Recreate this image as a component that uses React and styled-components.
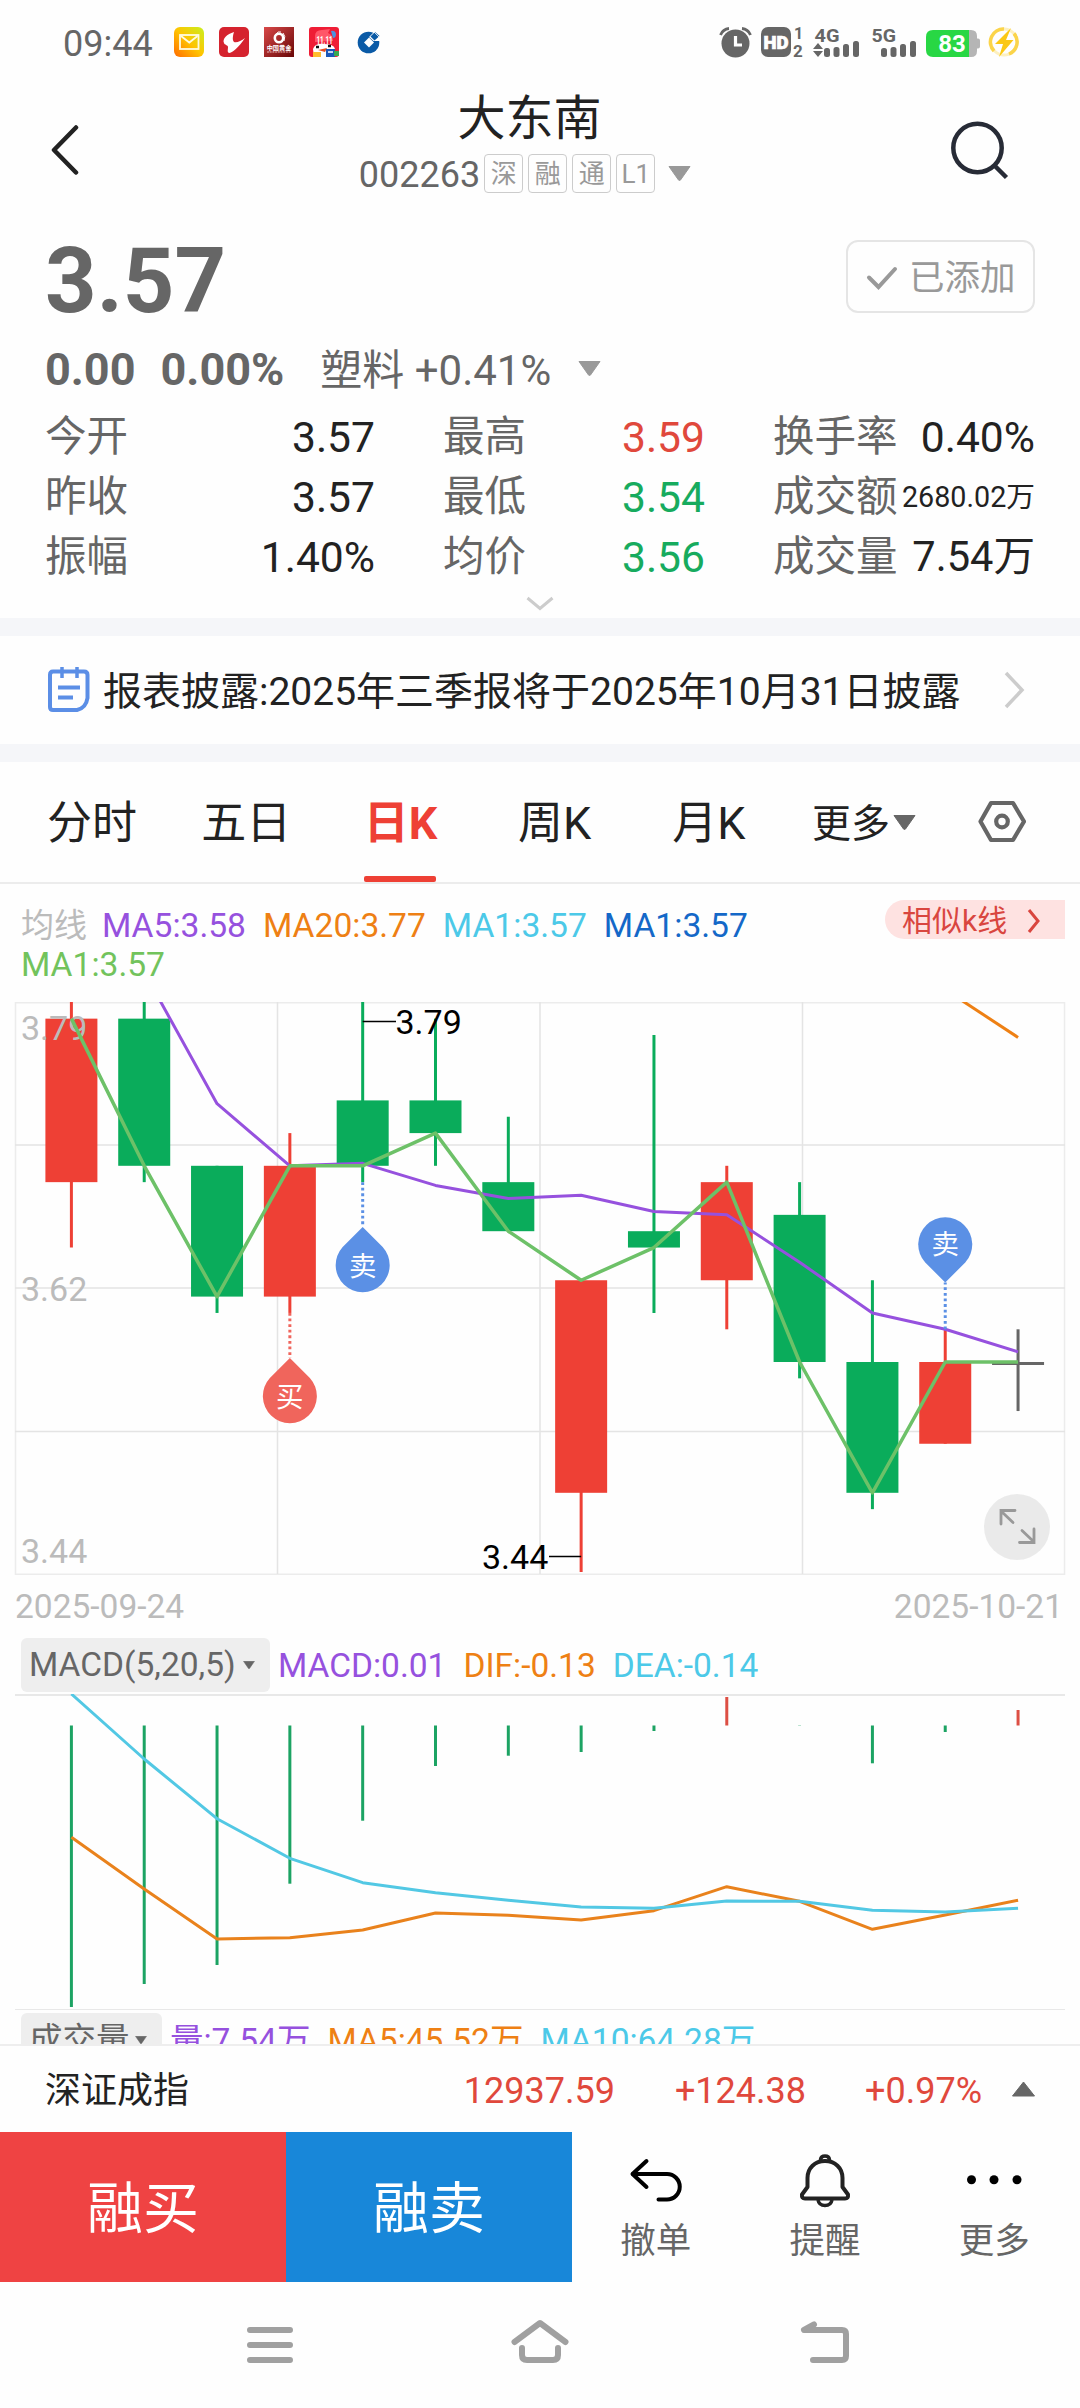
import React from 'react';
import styled, { createGlobalStyle } from 'styled-components';

const GlobalStyle = createGlobalStyle`
  * { box-sizing: border-box; }
  body {
    margin: 0;
    background: #fefefe;
    font-family: Roboto, "Noto Sans CJK SC", sans-serif;
    color: #222;
  }
  svg { display: block; flex: none; }
`;

const C = {
  red: '#ee4035',
  green: '#0aac5b',
  up: '#e0483c',
  down: '#17ab5e',
  purple: '#9651de',
  orange: '#ee8014',
  cyan: '#4cc9e8',
  blue: '#1468c8',
  lime: '#72c35c',
  gray: '#666',
  light: '#bbb',
};

const Screen = styled.div`
  width: 1080px;
  height: 2408px;
  overflow: hidden;
  display: flex;
  flex-direction: column;
  background: #fefefe;
`;

/* ---------- status bar ---------- */
const StatusBar = styled.div`
  height: 84px;
  flex: none;
  display: flex;
  align-items: center;
  padding: 0 60px 0 63px;
`;
const Time = styled.span`
  font-size: 36px;
  line-height: 40px;
  padding-top: 3px;
  width: 111px;
  color: #666;
`;
const AppIcons = styled.div`
  display: flex;
  gap: 15px;
  flex: 1;
`;

/* ---------- header ---------- */
const Header = styled.header`
  height: 132px;
  flex: none;
  display: grid;
  grid-template-columns: 1fr auto 1fr;
  align-items: center;
  padding: 0 71px 0 50px;
`;
const TitleBlock = styled.div`
  align-self: start;
  padding-top: 6px;
  display: flex;
  flex-direction: column;
  align-items: center;
`;
const Title = styled.h1`
  margin: 0;
  font-size: 48px;
  font-weight: 400;
  line-height: 57px;
`;
const CodeRow = styled.div`
  margin-top: 7px;
  height: 39px;
  display: flex;
  align-items: center;
  padding-right: 9px;
`;
const Code = styled.span`
  font-size: 36px;
  line-height: 39px;
  padding-top: 4px;
  margin-right: 4px;
  color: #666;
`;
const Tag = styled.span`
  width: 39px;
  height: 39px;
  margin-right: 5px;
  border: 1.5px solid #ccc;
  border-radius: 4px;
  font-size: 26px;
  line-height: 39px;
  text-align: center;
  color: #999;
`;
const RightSlot = styled.div`
  justify-self: end;
`;

/* ---------- quote ---------- */
const Quote = styled.section`
  height: 402px;
  flex: none;
  padding: 24px 45px 0;
  display: flex;
  flex-direction: column;
`;
const PriceRow = styled.div`
  height: 73px;
  display: flex;
  align-items: center;
  justify-content: space-between;
`;
const Price = styled.span`
  font-size: 90px;
  font-weight: 700;
  line-height: 73px;
  padding-top: 10px;
  color: #666;
`;
const AddedButton = styled.button`
  width: 189px;
  height: 73px;
  padding: 2px 0 0 18px;
  display: flex;
  align-items: center;
  gap: 11px;
  border: 2px solid #e5e5e5;
  border-radius: 12px;
  background: none;
  font: 400 35.5px/66px Roboto, "Noto Sans CJK SC", sans-serif;
  color: #999;
`;
const ChangeRow = styled.div`
  margin-top: 30px;
  display: flex;
  align-items: baseline;
  line-height: 54px;
  color: #666;
`;
const Change = styled.span`
  font-size: 45px;
  font-weight: 700;
  margin-right: ${(p) => p.$gap}px;
`;
const Sector = styled.span`
  font-size: 42px;
  margin-right: 27px;
`;
const SectorArrow = styled.span`
  align-self: center;
  padding-bottom: 5px;
`;
const Stats = styled.div`
  margin-top: 9px;
  display: grid;
  grid-template-columns: 330px 262px 262px;
  column-gap: 68px;
`;
const Stat = styled.div`
  height: 60px;
  display: flex;
  align-items: center;
  justify-content: space-between;
  white-space: nowrap;
  font-size: 42px;
  line-height: 60px;
`;
const StatLabel = styled.span`
  color: #666;
  font-size: 41.5px;
`;
const StatValue = styled.span`
  color: ${(p) => p.$color || '#222'};
  font-size: ${(p) => p.$size || 42.6}px;
`;
const Expander = styled.div`
  display: flex;
  justify-content: center;
  padding-top: 9px;
`;

const Band = styled.div`
  height: 18px;
  flex: none;
  background: #f5f6f9;
`;

/* ---------- notice ---------- */
const Notice = styled.div`
  height: 108px;
  flex: none;
  display: flex;
  align-items: center;
  padding: 0 54px 0 47px;
`;
const NoticeText = styled.span`
  flex: 1;
  padding: 3px 0 0 13px;
  font-size: 39px;
  line-height: 54px;
  white-space: nowrap;
`;

/* ---------- period tabs ---------- */
const Tabs = styled.nav`
  height: 122px;
  flex: none;
  display: flex;
  padding-left: 15px;
  border-bottom: 2px solid #ececec;
`;
const Tab = styled.div`
  width: 154.2px;
  display: flex;
  flex-direction: column;
  align-items: center;
  font-size: 45px;
  line-height: 60px;
  padding-top: 32px;
  color: ${(p) => (p.$active ? C.red : '#222')};
  font-weight: ${(p) => (p.$active ? 700 : 400)};
`;
const TabMark = styled.span`
  width: 72px;
  height: 6px;
  margin-top: auto;
  border-radius: 2px;
  background: ${C.red};
`;
const MoreTab = styled.div`
  width: 166px;
  margin-left: 26px;
  display: flex;
  align-items: center;
  gap: 3px;
  font-size: 39px;
`;
const MoreText = styled.span`
  padding-top: 3px;
  line-height: 60px;
`;
const HexSlot = styled.div`
  display: flex;
  align-items: center;
`;

/* ---------- charts ---------- */
const Charts = styled.section`
  height: 1160px;
  flex: none;
  overflow: hidden;
`;
const LegendArea = styled.div`
  height: 118px;
  display: flex;
  align-items: flex-start;
  padding: 0 15px 0 21px;
`;
const Legend = styled.div`
  flex: 1;
  display: flex;
  flex-wrap: wrap;
  column-gap: 17px;
  padding-top: 22px;
  font-size: 33.6px;
  line-height: 39px;
`;
const LegendTitle = styled.span`
  width: 64px;
  font-size: 33px;
  white-space: nowrap;
  color: ${C.light};
`;
const Colored = styled.span`
  color: ${(p) => p.$color};
`;
const SimilarPill = styled.div`
  width: 180px;
  height: 39px;
  margin-top: 16px;
  display: flex;
  align-items: center;
  gap: 20px;
  padding: 2px 0 0 17px;
  border-radius: 20px 0 0 20px;
  background: #fee2e1;
  font-size: 30px;
  line-height: 37px;
  color: #d9463f;
`;
const KChart = styled.div`
  position: relative;
  height: 573px;
`;
const FullscreenButton = styled.div`
  position: absolute;
  right: 30px;
  bottom: 15px;
  width: 66px;
  height: 66px;
  border-radius: 50%;
  background: rgba(232, 232, 232, 0.9);
`;
const DateRow = styled.div`
  height: 63px;
  padding: 0 17px 0 15px;
  display: flex;
  align-items: center;
  justify-content: space-between;
  font-size: 33.5px;
  line-height: 40px;
  color: ${C.light};
`;
const IndicatorRow = styled.div`
  height: ${(p) => (p.$last ? 54 : 56)}px;
  margin-top: ${(p) => (p.$last ? 3 : 0)}px;
  display: flex;
  padding-left: 21px;
  font-size: 33.5px;
  line-height: 56px;
  white-space: nowrap;
`;
const Chip = styled.div`
  width: ${(p) => p.$width}px;
  height: 54px;
  margin-right: 8px;
  padding: 0 15px 0 8px;
  display: flex;
  align-items: center;
  justify-content: space-between;
  border-radius: 6px;
  background: #eee;
  color: #666;
`;
const Readings = styled.div`
  display: flex;
  gap: 17px;
`;

/* ---------- index row ---------- */
const IndexRow = styled.div`
  height: 88px;
  flex: none;
  display: flex;
  align-items: center;
  border-top: 2px solid #eee;
  padding: 0 45px;
  font-size: 36px;
  line-height: 50px;
`;
const IndexName = styled.span`
  flex: 1;
  padding-top: 3px;
`;
const IndexValue = styled.span`
  padding-top: 3px;
  margin-right: ${(p) => p.$gap}px;
  color: ${C.up};
`;

/* ---------- action bar ---------- */
const ActionBar = styled.div`
  height: 150px;
  flex: none;
  display: flex;
`;
const TradeButton = styled.div`
  width: 286px;
  display: flex;
  align-items: center;
  justify-content: center;
  font-size: 56px;
  line-height: 80px;
  padding-top: 4px;
  color: #fff;
  background: ${(p) => p.$color};
`;
const Action = styled.div`
  flex: 1;
  display: flex;
  flex-direction: column;
  align-items: center;
  padding-top: 18px;
  padding-right: 2px;
`;
const ActionLabel = styled.span`
  margin-top: 6px;
  font-size: 35.5px;
  line-height: 50px;
  color: #666;
`;
const SystemNav = styled.div`
  height: 126px;
  flex: none;
  display: flex;
  justify-content: space-between;
  align-items: flex-start;
  padding: 34px 224px 0 240px;
`;

/* ---------- drawings ---------- */
const Triangle = ({ w = 23, h = 15, color = '#999', up }) => (
  <svg width={w} height={h} viewBox="0 0 23 15">
    <path
      d={up ? 'M11.5 0.5 L22.5 14.5 H0.5Z' : 'M1 0.5 H22 L12.5 14 Q11.5 15 10.5 14Z'}
      fill={color}
      stroke={color}
      strokeLinejoin="round"
    />
  </svg>
);

const MailIcon = () => (
  <svg width="30" height="30" viewBox="0 0 30 30">
    <defs>
      <linearGradient id="mail" x1="0" y1="1" x2="1" y2="0">
        <stop offset="0" stopColor="#ff6a00" />
        <stop offset="0.5" stopColor="#ffc400" />
        <stop offset="1" stopColor="#c8f020" />
      </linearGradient>
    </defs>
    <rect width="30" height="30" rx="6" fill="url(#mail)" />
    <rect x="6" y="8" width="18.500" height="14" fill="none" stroke="#fffbe0" strokeWidth="1.8" />
    <path d="M7 9 L15.300 15.500 L23.500 9" fill="none" stroke="#fffbe0" strokeWidth="1.8" />
  </svg>
);
const BrokerIcon = () => (
  <svg width="30" height="30" viewBox="0 0 30 30">
    <rect width="30" height="30" rx="5" fill="#d5232e" />
    <path d="M15 5 C8 7 3 12 5 16 C5.500 18 9 18 9 20 C9 23 8 25 10 26 C13 26 20 20 26 11 C22 14 18 16 15 15 C13 13 14 8 15 5Z" fill="#fff" />
  </svg>
);
const GoldIcon = () => (
  <svg width="30" height="30" viewBox="0 0 30 30">
    <defs>
      <linearGradient id="gold" x1="0" y1="0" x2="1" y2="1">
        <stop offset="0" stopColor="#d84848" />
        <stop offset="1" stopColor="#680606" />
      </linearGradient>
    </defs>
    <rect width="30" height="30" fill="url(#gold)" />
    <circle cx="15" cy="11" r="4.200" fill="none" stroke="#fff" strokeWidth="2.600" />
    <path d="M12 7 Q14 4 17 5 M19 6 Q22 9 20 14" fill="none" stroke="#fff" strokeWidth="1" />
    <text x="15" y="23" textAnchor="middle" fontSize="6.2" fontWeight="700" fill="#fff">中国黄金</text>
    <path d="M3 25 H27" stroke="#e8b8b8" strokeWidth="1" strokeDasharray="2 0.7" />
  </svg>
);
const ShopIcon = () => (
  <svg width="30" height="30" viewBox="0 0 30 30">
    <rect width="30" height="30" rx="3" fill="#ef1d35" />
    <path d="M6 9 Q6 3 13 3 L21 2 L19 6 Q24 8 24 14 L6 15Z" fill="#ff5668" />
    <path d="M22 4 q4 -1 5 3 q0 4 -3 4z" fill="#4d92de" />
    <text x="15.500" y="16.500" textAnchor="middle" fontSize="11" fontWeight="700" fill="#fff" textLength="16" lengthAdjust="spacingAndGlyphs">11.11</text>
    <path d="M4 22 Q6 16 15 17 Q25 17 26 22 L25 30 H5Z" fill="#fff" />
    <path d="M7 20 h3 M19 19 h3" stroke="#111" strokeWidth="2.400" />
    <path d="M9 23 L18 21 L16 25Z" fill="#e84c20" />
    <path d="M4 25 h8 v5 h-8z" fill="#ffbd2c" />
    <path d="M17 22 h9 v8 h-9z" fill="#1b58b9" />
    <path d="M25 24 h5 v5 h-5z" fill="#38a852" />
    <path d="M19 25 h5" stroke="#fff" strokeWidth="1.500" />
  </svg>
);
const BankIcon = () => (
  <svg width="30" height="30" viewBox="0 0 30 30">
    <circle cx="14.500" cy="15.500" r="10.800" fill="#0a5aa6" />
    <path d="M15 10 L20 5 L27 5 V14 H19.500Z" fill="#fefefe" />
    <path d="M15 10.500 L20 15.500 L15 20.500 L10 15.500Z" fill="#fefefe" />
    <path d="M16.500 9.500 L21 5 L25.500 9 L20.500 13.500Z" fill="#0a5aa6" />
    <path d="M20 5 L26 11" stroke="#fefefe" strokeWidth="0.8" />
  </svg>
);

const SystemIcons = () => (
  <svg width="301" height="40" viewBox="720 22 301 40" fill="#666">
    <circle cx="736.500" cy="43.500" r="14" />
    <path d="M721.500 35 Q724 29 730 28.500 M743 28.500 Q749 29 751.500 35" fill="none" stroke="#666" strokeWidth="2.800" />
    <path d="M736.500 36 V45 H743" fill="none" stroke="#fff" strokeWidth="3.200" />
    <rect x="762" y="27" width="30" height="30" rx="7" />
    <text x="777" y="48.500" textAnchor="middle" fontSize="18" fontWeight="900" fill="#fff" stroke="#fff" strokeWidth="0.700" textLength="25" lengthAdjust="spacingAndGlyphs">HD</text>
    <text x="795" y="38.500" fontSize="16" fontWeight="700">1</text>
    <text x="794" y="57" fontSize="17" fontWeight="700">2</text>
    <text x="815.500" y="42" fontSize="19" fontWeight="700" textLength="25" lengthAdjust="spacingAndGlyphs">4G</text>
    <path d="M814 49 L819 43 L824 49Z M814 51 L819 57 L824 51Z" />
    <rect x="825" y="48" width="6" height="9" rx="2.500" />
    <rect x="834.500" y="47" width="6" height="10" rx="2.500" />
    <rect x="844" y="44" width="6" height="13" rx="2.500" />
    <rect x="854" y="41" width="6" height="16" rx="2.500" />
    <text x="872.500" y="42" fontSize="19" fontWeight="700" textLength="24.500" lengthAdjust="spacingAndGlyphs">5G</text>
    <rect x="882" y="48" width="6" height="9" rx="2.500" />
    <rect x="891.500" y="47" width="6" height="10" rx="2.500" />
    <rect x="901" y="44" width="6" height="13" rx="2.500" />
    <rect x="911" y="41" width="6" height="16" rx="2.500" />
    <path d="M965 30 h7 q6 0 6 6 v2.500 h1 q2 0 2 2 v6 q0 2 -2 2 h-1 v2.500 q0 6 -6 6 h-7z" fill="#b5b5b5" />
    <path d="M934 30 H970 V57 H934 Q927 57 927 50 V37 Q927 30 934 30Z" fill="#28d744" />
    <text x="953" y="52" textAnchor="middle" fontSize="24" fontWeight="700" fill="#fff">83</text>
    <circle cx="1005" cy="42" r="13" fill="none" stroke="#fdf0c0" strokeWidth="3" />
    <path d="M995 51 A13 13 0 0 1 1005 29 M1015 33.500 A13 13 0 0 1 1010 54" fill="none" stroke="#fbd44a" strokeWidth="3.500" />
    <path d="M1012 28 L996 44 H1004 L1000 57 L1014.500 40 H1007Z" fill="#fbc814" />
  </svg>
);

/* ---------- market data ---------- */
const X0 = 71.4;
const STEP = 72.82;
const xAt = (i) => X0 + i * STEP;
const yAt = (p) => 0.3 + (3.79 - p) * 1635;

const candles = [
  { top: 3.78, bot: 3.68, hi: 3.8, lo: 3.64, up: true, close: 3.78 },
  { top: 3.78, bot: 3.69, hi: 3.8, lo: 3.68, close: 3.69 },
  { top: 3.69, bot: 3.61, hi: 3.69, lo: 3.6, close: 3.61 },
  { top: 3.69, bot: 3.61, hi: 3.71, lo: 3.6, up: true, close: 3.69 },
  { top: 3.73, bot: 3.69, hi: 3.8, lo: 3.68, close: 3.69 },
  { top: 3.73, bot: 3.71, hi: 3.78, lo: 3.69, close: 3.71 },
  { top: 3.68, bot: 3.65, hi: 3.72, lo: 3.65, close: 3.65 },
  { top: 3.62, bot: 3.49, hi: 3.62, lo: 3.4415, up: true, close: 3.62 },
  { top: 3.65, bot: 3.64, hi: 3.77, lo: 3.6, close: 3.64 },
  { top: 3.68, bot: 3.62, hi: 3.69, lo: 3.59, up: true, close: 3.68 },
  { top: 3.66, bot: 3.57, hi: 3.68, lo: 3.56, close: 3.57 },
  { top: 3.57, bot: 3.49, hi: 3.62, lo: 3.48, close: 3.49 },
  { top: 3.57, bot: 3.52, hi: 3.59, lo: 3.52, up: true, close: 3.57 },
  { top: 3.57, bot: 3.57, hi: 3.59, lo: 3.54, flat: true, close: 3.57 },
];
const ma5 = [null, 3.8085, 3.728, 3.69, 3.6915, 3.678, 3.67, 3.672, 3.662, 3.66, 3.631, 3.6, 3.59, 3.5762];

const histogram = [313, 290, 271, 189.7, 126.7, 72, 61.7, 58, 37, 3, 31.8, 69.3, 38, 16];
const dea = [0, 65, 124.7, 164.3, 188.7, 198.7, 206.3, 213, 214.3, 207, 207.3, 216.3, 218, 214.3];
const dif = [143.3, 195, 245, 243.7, 236, 219, 221.3, 226, 216.7, 192.7, 207.3, 235.3, 221, 206.3];

const toPoints = (ys) =>
  ys.map((y, i) => (y === null ? null : `${xAt(i)},${y}`)).filter(Boolean).join(' ');

const Pin = ({ x, y, color, label, down, wickY }) => {
  const tip = down ? y + 39 : y - 39;
  const s = down ? 1 : -1;
  return (
    <g>
      <path d={`M${x} ${wickY} V${tip}`} stroke={color} strokeWidth="3" strokeDasharray="2.800 2.800" />
      <path
        d={`M${x} ${tip} L${x - 20} ${y + s * 19} A27 27 0 1 ${down ? 1 : 0} ${x + 20} ${y + s * 19}Z`}
        fill={color}
      />
      <text x={x} y={y + 10} textAnchor="middle" fontSize="27.500" fill="#fff">{label}</text>
    </g>
  );
};

const CandleChart = () => (
  <svg width="1080" height="573" viewBox="0 0 1080 573" fontSize="34">
    <defs>
      <clipPath id="plot"><rect x="15" y="0" width="1050" height="573" /></clipPath>
    </defs>
    <g stroke="#e4e4e4" strokeWidth="1.500" fill="none">
      <rect x="15.500" y="0.750" width="1049" height="571.500" stroke="#ececec" />
      <path d="M15 143 H1065 M15 286 H1065 M15 429.500 H1065 M277.500 0 V572 M540 0 V572 M802.500 0 V572" />
    </g>
    <g clipPath="url(#plot)">
      {candles.map((c, i) => {
        const color = c.flat ? '#666' : c.up ? C.red : C.green;
        const x = xAt(i);
        return (
          <g key={i}>
            <path d={`M${x} ${yAt(c.hi)} V${yAt(c.lo)}`} stroke={color} strokeWidth="3" />
            {c.flat ? (
              <path d={`M${x - 26} ${yAt(c.top) + 1.5} h52`} stroke={color} strokeWidth="3" />
            ) : (
              <rect x={x - 26} y={yAt(c.top)} width="52" height={yAt(c.bot) - yAt(c.top)} fill={color} />
            )}
          </g>
        );
      })}
      <g fill={C.light}>
        <text x="21" y="37.500">3.79</text>
        <text x="21" y="299">3.62</text>
        <text x="21" y="561">3.44</text>
      </g>
      <g fill="none" strokeWidth="3" strokeLinejoin="round">
        <polyline points={toPoints(ma5.map((v) => (v === null ? null : yAt(v))))} stroke={C.purple} />
        <path d={`M${xAt(12)} -12.400 L${xAt(13)} 35.400`} stroke={C.orange} />
        <polyline points={toPoints(candles.map((c) => yAt(c.close)))} stroke="#6dc168" strokeWidth="3.500" />
      </g>
      <path d={`M${xAt(4)} 19.500 H396 M549 554.500 H${xAt(7)}`} stroke="#000" strokeWidth="1.500" />
      <text x="395.500" y="31.500" fill="#000">3.79</text>
      <text x="482" y="566.500" fill="#000">3.44</text>
    </g>
    <Pin x={xAt(4)} y={264} color="#5b90e5" label="卖" wickY={yAt(3.68)} />
    <Pin x={xAt(3)} y={395} color="#f0655c" label="买" wickY={yAt(3.6)} />
    <Pin x={xAt(12)} y={241.500} color="#5b90e5" label="卖" wickY={yAt(3.59)} down />
  </svg>
);

const ZERO = 31.5;
const MacdChart = () => (
  <svg width="1080" height="316" viewBox="0 0 1080 316">
    <path d="M15 1 H1065" stroke="#e8e8e8" strokeWidth="2" />
    <path d="M15 315.500 H1065" stroke="#e8e8e8" strokeWidth="1" />
    {histogram.map((y, i) => (
      <path
        key={i}
        d={`M${xAt(i)} ${ZERO} V${y}`}
        stroke={y < ZERO ? '#dd4f44' : '#1ca363'}
        strokeWidth="3"
      />
    ))}
    <g fill="none" strokeWidth="3" strokeLinejoin="round">
      <polyline points={toPoints(dif)} stroke="#e9821c" />
      <polyline points={toPoints(dea)} stroke="#52c8e4" />
    </g>
  </svg>
);

const stats = [
  ['今开', '3.57'], ['最高', '3.59', C.up], ['换手率', '0.40%'],
  ['昨收', '3.57'], ['最低', '3.54', C.down], ['成交额', '2680.02万', null, 28.7],
  ['振幅', '1.40%'], ['均价', '3.56', C.down], ['成交量', '7.54万', null, 41.6],
];
const tabs = ['分时', '五日', '日K', '周K', '月K'];

export default function App() {
  return (
    <Screen>
      <GlobalStyle />
      <StatusBar>
        <Time>09:44</Time>
        <AppIcons>
          <MailIcon /><BrokerIcon /><GoldIcon /><ShopIcon /><BankIcon />
        </AppIcons>
        <SystemIcons />
      </StatusBar>

      <Header>
        <svg width="30" height="50" viewBox="0 0 30 50">
          <path d="M26 2.500 L4 25 L26 47.500" fill="none" stroke="#222" strokeWidth="4.500" strokeLinecap="round" strokeLinejoin="round" />
        </svg>
        <TitleBlock>
          <Title>大东南</Title>
          <CodeRow>
            <Code>002263</Code>
            {['深', '融', '通', 'L1'].map((t) => <Tag key={t}>{t}</Tag>)}
            <svg width="8" height="1" />
            <Triangle />
          </CodeRow>
        </TitleBlock>
        <RightSlot>
          <svg width="60" height="60" viewBox="0 0 60 60">
            <circle cx="28.500" cy="28" r="24.200" fill="none" stroke="#272b36" strokeWidth="4.500" />
            <path d="M46 46 L57.500 57.500" stroke="#272b36" strokeWidth="4.500" />
          </svg>
        </RightSlot>
      </Header>

      <Quote>
        <PriceRow>
          <Price>3.57</Price>
          <AddedButton>
            <svg width="32" height="26" viewBox="0 0 32 26">
              <path d="M3 12.500 L12.500 22 L29 4" fill="none" stroke="#999" strokeWidth="4" strokeLinecap="round" />
            </svg>
            已添加
          </AddedButton>
        </PriceRow>
        <ChangeRow>
          <Change $gap={25}>0.00</Change>
          <Change $gap={36}>0.00%</Change>
          <Sector>塑料 +0.41%</Sector>
          <SectorArrow><Triangle /></SectorArrow>
        </ChangeRow>
        <Stats>
          {stats.map(([label, value, color, size]) => (
            <Stat key={label}>
              <StatLabel>{label}</StatLabel>
              <StatValue $color={color} $size={size}>{value}</StatValue>
            </Stat>
          ))}
        </Stats>
        <Expander>
          <svg width="30" height="16" viewBox="0 0 30 16">
            <path d="M2.500 2 L15 12.500 L27.500 2" fill="none" stroke="#ccc" strokeWidth="3" />
          </svg>
        </Expander>
      </Quote>

      <Band />
      <Notice>
        <svg width="43" height="46" viewBox="0 0 43 46" fill="none" stroke="#5b8ee6" strokeWidth="4">
          <path d="M6 4.500 H37 Q40.500 4.500 40.500 8 V31 Q39 41 30 43 H6 Q3 43 3 40 V8 Q3 4.500 6 4.500Z" />
          <path d="M15 0 V11 M30 0 V11" strokeWidth="3.500" />
          <path d="M11 20.500 H33 M11 30.500 H26" />
        </svg>
        <NoticeText>报表披露:2025年三季报将于2025年10月31日披露</NoticeText>
        <svg width="22" height="40" viewBox="0 0 22 40">
          <path d="M2 3 L18 20 L2 37" fill="none" stroke="#ccc" strokeWidth="3.500" />
        </svg>
      </Notice>
      <Band />

      <Tabs>
        {tabs.map((t, i) => (
          <Tab key={t} $active={i === 2}>
            {t}
            {i === 2 && <TabMark />}
          </Tab>
        ))}
        <MoreTab>
          <MoreText>更多</MoreText>
          <Triangle color="#666" />
        </MoreTab>
        <HexSlot>
          <svg width="48" height="44" viewBox="0 0 48 44" fill="none" stroke="#666" strokeWidth="4.200">
            <path d="M13 3 H35 L46 21.500 L35 40 H13 L2.500 21.500Z" strokeLinejoin="round" />
            <circle cx="24" cy="21.500" r="5.800" />
          </svg>
        </HexSlot>
      </Tabs>

      <Charts>
        <LegendArea>
          <Legend>
            <LegendTitle>均线</LegendTitle>
            <Colored $color={C.purple}>MA5:3.58</Colored>
            <Colored $color={C.orange}>MA20:3.77</Colored>
            <Colored $color={C.cyan}>MA1:3.57</Colored>
            <Colored $color={C.blue}>MA1:3.57</Colored>
            <Colored $color={C.lime}>MA1:3.57</Colored>
          </Legend>
          <SimilarPill>
            相似k线
            <svg width="14" height="26" viewBox="0 0 14 26">
              <path d="M2 2 L11 13 L2 24" fill="none" stroke="#d9463f" strokeWidth="3" />
            </svg>
          </SimilarPill>
        </LegendArea>
        <KChart>
          <CandleChart />
          <FullscreenButton>
            <svg width="66" height="66" viewBox="0 0 66 66" fill="none" stroke="#999" strokeWidth="2.800" strokeLinecap="round">
              <path d="M31 16.500 H17 V30 M18 18 L29 28.500" />
              <path d="M35.500 48.500 H50 V35 M49 47 L38 36.500" />
            </svg>
          </FullscreenButton>
        </KChart>
        <DateRow>
          <span>2025-09-24</span>
          <span>2025-10-21</span>
        </DateRow>
        <IndicatorRow>
          <Chip $width={249}>
            MACD(5,20,5)
            <Triangle w={12} h={8} color="#666" />
          </Chip>
          <Readings>
            <Colored $color={C.purple}>MACD:0.01</Colored>
            <Colored $color={C.orange}>DIF:-0.13</Colored>
            <Colored $color={C.cyan}>DEA:-0.14</Colored>
          </Readings>
        </IndicatorRow>
        <MacdChart />
        <IndicatorRow $last>
          <Chip $width={141}>
            成交量
            <Triangle w={12} h={8} color="#666" />
          </Chip>
          <Readings>
            <Colored $color={C.purple}>量:7.54万</Colored>
            <Colored $color={C.orange}>MA5:45.52万</Colored>
            <Colored $color={C.cyan}>MA10:64.28万</Colored>
          </Readings>
        </IndicatorRow>
      </Charts>

      <IndexRow>
        <IndexName>深证成指</IndexName>
        <IndexValue $gap={60}>12937.59</IndexValue>
        <IndexValue $gap={59}>+124.38</IndexValue>
        <IndexValue $gap={30}>+0.97%</IndexValue>
        <Triangle color="#666" up h={16} />
      </IndexRow>

      <ActionBar>
        <TradeButton $color="#ef4343">融买</TradeButton>
        <TradeButton $color="#1887d9">融卖</TradeButton>
        <Action>
          <svg width="60" height="60" viewBox="0 0 60 60" fill="none" stroke="#000" strokeWidth="4" strokeLinecap="round" strokeLinejoin="round">
            <path d="M20.500 11 L6.500 24 L20.500 37" />
            <path d="M7 24 H41 A12.500 12.500 0 0 1 41 49.500 H32.500" />
          </svg>
          <ActionLabel>撤单</ActionLabel>
        </Action>
        <Action>
          <svg width="60" height="60" viewBox="0 0 60 60" fill="none" stroke="#222" strokeWidth="4" strokeLinejoin="round">
            <path d="M30 11 C20 11 12.500 18 12.500 28 V37 L7 44.500 Q6.500 48.500 10 48.500 H50 Q53.500 48.500 53 44.500 L47.500 37 V28 C47.500 18 40 11 30 11Z" />
            <path d="M25.500 11 V9.500 Q26 6 30 6 Q34 6 34.500 9.500 V11 M23 50 Q24 55.500 30 55.500 Q36 55.500 37 50" strokeWidth="3.500" />
          </svg>
          <ActionLabel>提醒</ActionLabel>
        </Action>
        <Action>
          <svg width="60" height="60" viewBox="0 0 60 60">
            <circle cx="7.500" cy="29.700" r="4.500" />
            <circle cx="30" cy="29.700" r="4.500" />
            <circle cx="53" cy="29.700" r="4.500" />
          </svg>
          <ActionLabel>更多</ActionLabel>
        </Action>
      </ActionBar>

      <SystemNav>
        <svg width="60" height="50" viewBox="0 0 60 50" stroke="#a0a0a0" strokeWidth="6" strokeLinecap="round">
          <path d="M10 14 H50 M10 29 H50 M10 44 H50" />
        </svg>
        <svg width="60" height="50" viewBox="8 0 60 50" fill="none" stroke="#a0a0a0" strokeWidth="6" strokeLinecap="round" strokeLinejoin="round" overflow="visible">
          <path d="M4.500 26 L30 7 L55.500 26" />
          <path d="M12 32 V39 Q12 44 17 44 H43 Q48 44 48 39 V32" />
        </svg>
        <svg width="60" height="50" viewBox="0 0 60 50" fill="none" stroke="#a0a0a0" strokeWidth="6" strokeLinecap="round" strokeLinejoin="round">
          <path d="M18 8.500 L8 14 H46 Q50 14 50 18 V40 Q50 44 46 44 H17" />
        </svg>
      </SystemNav>
    </Screen>
  );
}
